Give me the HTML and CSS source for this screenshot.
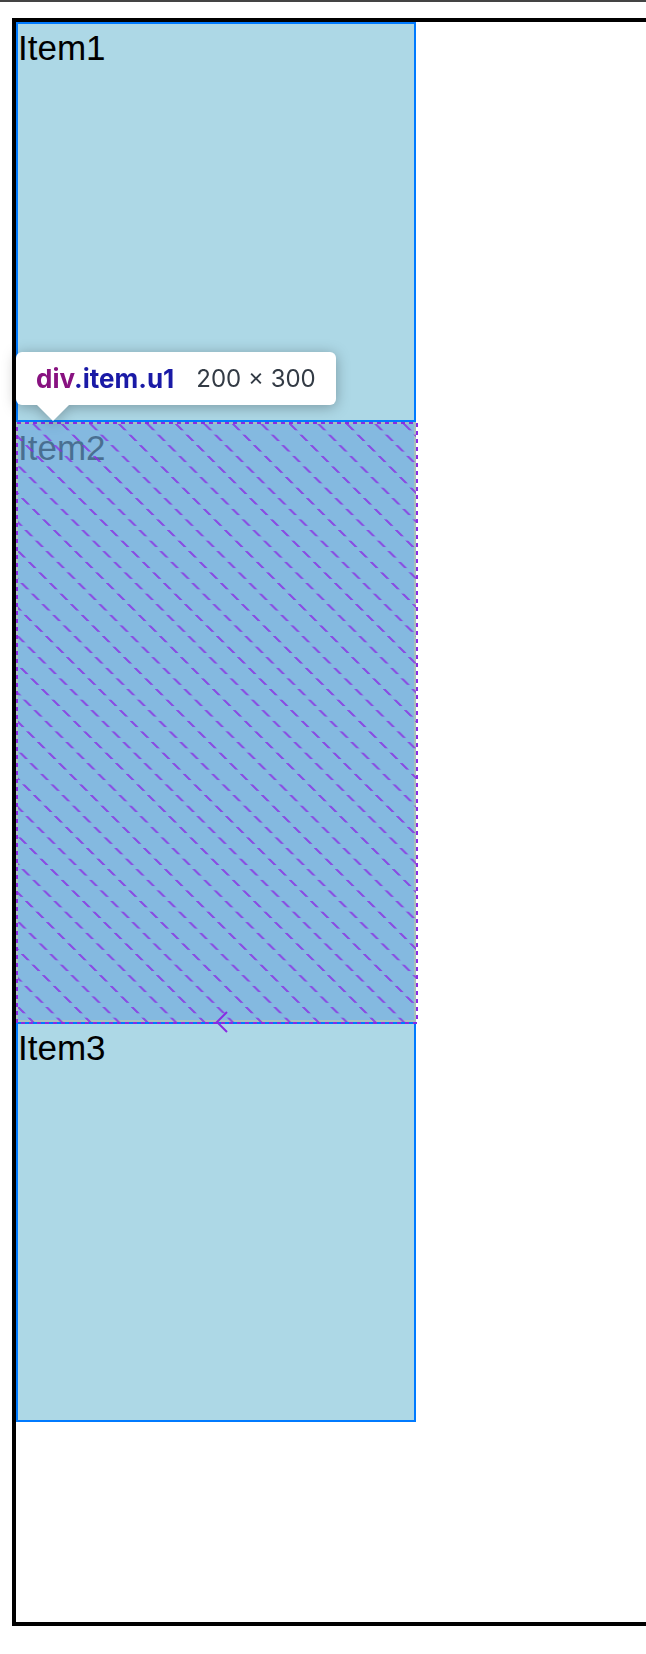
FILE: index.html
```html
<!DOCTYPE html>
<html>
<head>
<meta charset="utf-8">
<link rel="stylesheet" href="styles.css">
</head>
<body>
<div class="topbar"></div>
<div class="container">
  <div class="item">Item1</div>
  <div class="item u1">Item2
    <div class="highlight">
      <svg class="hatch" width="402" height="602" viewBox="0 0 402 602">
        <defs>
          <pattern id="hatch" x="14" y="2" width="28.5" height="10.6" patternUnits="userSpaceOnUse" patternTransform="skewX(45)">
            <line x1="1.6" y1="0" x2="1.6" y2="6.4" stroke="#8a2be2" stroke-opacity="0.75" stroke-width="3"/>
          </pattern>
        </defs>
        <rect x="2" y="2" width="398" height="598" fill="url(#hatch)"/>
        <rect x="1" y="1" width="400" height="600" fill="none" stroke="#8a2be2" stroke-width="2" stroke-dasharray="4 4"/>
        <path d="M211 590 L201 600 L211 610" fill="none" stroke="#8a2be2" stroke-width="2"/>
      </svg>
    </div>
  </div>
  <div class="item">Item3</div>
</div>
<div class="tooltip">
  <span class="name"><span class="tag">div</span><span class="cls">.item.u1</span></span>
  <span class="dims">200 × 300</span>
</div>
</body>
</html>
```
FILE: styles.css
```css
html, body {
  margin: 0;
  padding: 0;
  overflow: hidden;
  background: #fff;
}

body {
  position: relative;
  font-family: "Liberation Sans", Arial, sans-serif;
}

.topbar {
  height: 2px;
  background: #444;
}

.container {
  margin: 16px 0 0 12px;
  width: 630px;
  height: 1600px;
  border: 4px solid #000;
  border-right: none;
}

.item {
  position: relative;
  width: 396px;
  height: 396px;
  border: 2px solid #007aff;
  background: #add8e6;
  color: #000;
  font-size: 35px;
  line-height: 48px;
}

.item.u1 {
  height: 596px;
  z-index: 1;
}

.highlight {
  position: absolute;
  left: -2px;
  top: -2px;
  width: 396px;
  height: 596px;
  border: 2px solid rgba(255, 229, 153, 0.66);
  background: rgba(111, 168, 220, 0.66);
  background-clip: padding-box;
}

.hatch {
  position: absolute;
  left: -2px;
  top: -2px;
  overflow: visible;
}

.tooltip {
  position: absolute;
  z-index: 2;
  left: 16px;
  top: 352px;
  height: 53px;
  padding: 0 20px;
  display: flex;
  align-items: center;
  gap: 22px;
  background: #fff;
  border-radius: 6px;
  font-family: Inter, "Noto Sans", sans-serif;
  font-size: 24px;
  filter: drop-shadow(0 2px 7px rgba(0, 0, 0, 0.3));
}

.tooltip::after {
  content: "";
  position: absolute;
  left: 21px;
  top: 53px;
  border-left: 16px solid transparent;
  border-right: 16px solid transparent;
  border-top: 16px solid #fff;
}

.name {
  font-weight: 700;
  font-size: 26px;
}

.tag {
  color: #881280;
}

.cls {
  color: #1a1aa6;
}

.dims {
  color: #333b45;
}
```
